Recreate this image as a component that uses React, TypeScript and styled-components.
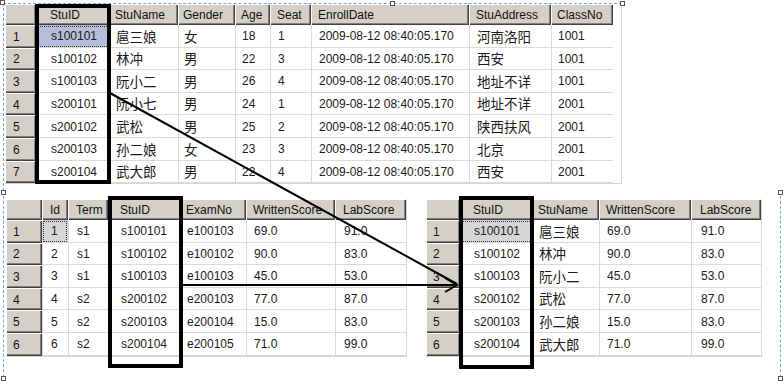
import * as React from 'react';
import styled, { createGlobalStyle } from 'styled-components';

interface IColumn {
  title: string;
  width: number;
  pad: number;
}
interface IBox {
  left: number;
  top: number;
  width: number;
  height: number;
}
interface IResultGridProps {
  columns: IColumn[];
  rows: string[][];
  selectedTone: 'blue' | 'gray';
  box: IBox;
}

const GlobalStyle = createGlobalStyle`
  html, body {
    margin: 0;
    padding: 0;
    background: #fff;
  }
  body {
    font-family: "Liberation Sans", Arial, "Noto Sans CJK SC", sans-serif;
    font-size: 12px;
    color: #1a1a1a;
  }
`;

const Page = styled.div`
  position: relative;
  width: 784px;
  height: 381px;
  overflow: hidden;
  background: #fff;
`;
const TopFrame = styled.div`
  margin: 3px 0 0 3px;
  width: 619px;
  height: 188px;
  border-top: 1px dashed #79a6da;
  border-left: 1px dashed #79a6da;
  padding-left: 1px;
  box-sizing: border-box;
`;
const BottomFrame = styled.div`
  margin-left: 3px;
  width: 778px;
  height: 186px;
  border-left: 1px dashed #79a6da;
  border-right: 1px dashed #79a6da;
  box-sizing: border-box;
  padding: 8px 0 0 2px;
  display: flex;
  gap: 19px;
`;
const GridWrap = styled.div`
  position: relative;
  align-self: flex-start;
`;
const Grid = styled.div<{ $cols: string }>`
  display: grid;
  grid-template-columns: ${(p) => p.$cols};
  grid-template-rows: 21px;
  grid-auto-rows: 22.6px;
  border-right: 1px solid #d9d7d0;
  border-bottom: 1px solid #d9d7d0;
`;
const HeadCell = styled.div<{ $pad: number }>`
  display: flex;
  align-items: center;
  padding-left: ${(p) => p.$pad}px;
  padding-top: 1px;
  background: #d4d0c8;
  box-shadow: inset 1px 1px #fff, inset -1px -1px #404040,
    inset -2px -2px #808080;
  white-space: nowrap;
  overflow: hidden;
  color: #111;
`;
const DataCell = styled.div<{ $pad: number; $sel?: 'blue' | 'gray' }>`
  display: flex;
  align-items: center;
  padding-left: ${(p) => p.$pad}px;
  padding-top: 1px;
  border-left: 1px solid #dcdad4;
  border-bottom: 1px solid #dcdad4;
  white-space: nowrap;
  overflow: hidden;
  color: #1a1a1a;
  background: ${(p) =>
    p.$sel === 'blue' ? '#b6bfda' : p.$sel === 'gray' ? '#d6d6d6' : '#fff'};
  outline: ${(p) => (p.$sel ? '1px dotted #333' : 'none')};
  outline-offset: -2px;
`;
const Cjk = styled.span`
  font-family: "Noto Sans CJK SC", sans-serif;
  font-size: 13.5px;
  line-height: 1;
`;
const Highlight = styled.div<{ $box: IBox }>`
  position: absolute;
  left: ${(p) => p.$box.left}px;
  top: ${(p) => p.$box.top}px;
  width: ${(p) => p.$box.width}px;
  height: ${(p) => p.$box.height}px;
  border: 4px solid #000;
  box-sizing: border-box;
  pointer-events: none;
`;
const Handle = styled.div<{ $x: number; $y: number }>`
  position: absolute;
  left: ${(p) => p.$x}px;
  top: ${(p) => p.$y}px;
  width: 5px;
  height: 5px;
  border: 1px solid #555;
  background: #fff;
  box-sizing: border-box;
`;
const Arrows = styled.svg`
  position: absolute;
  left: 0;
  top: 0;
  pointer-events: none;
`;

const hasCjk = (s: string) => /[\u4e00-\u9fff]/.test(s);

const ResultGrid: React.FunctionComponent<IResultGridProps> = ({
  columns,
  rows,
  selectedTone,
  box,
}) => (
  <GridWrap>
    <Grid $cols={columns.map((c) => `${c.width}px`).join(' ')}>
      {columns.map((c, i) => (
        <HeadCell key={i} $pad={c.pad}>
          {c.title}
        </HeadCell>
      ))}
      {rows.map((row, r) => (
        <React.Fragment key={r}>
          <HeadCell $pad={columns[0].pad}>{r + 1}</HeadCell>
          {row.map((v, i) => (
            <DataCell
              key={i}
              $pad={columns[i + 1].pad}
              $sel={r === 0 && i === 0 ? selectedTone : undefined}
            >
              {hasCjk(v) ? <Cjk>{v}</Cjk> : v}
            </DataCell>
          ))}
        </React.Fragment>
      ))}
    </Grid>
    <Highlight $box={box} />
  </GridWrap>
);

const date = '2009-08-12 08:40:05.170';

const studentCols: IColumn[] = [
  { title: '', width: 31, pad: 8 },
  { title: 'StuID', width: 74, pad: 14 },
  { title: 'StuName', width: 68, pad: 5 },
  { title: 'Gender', width: 57, pad: 5 },
  { title: 'Age', width: 35, pad: 6 },
  { title: 'Seat', width: 41, pad: 7 },
  { title: 'EnrollDate', width: 158, pad: 7 },
  { title: 'StuAddress', width: 82, pad: 7 },
  { title: 'ClassNo', width: 62, pad: 6 },
];
const students = [
  ['s100101', '扈三娘', '女', '18', '1', date, '河南洛阳', '1001'],
  ['s100102', '林冲', '男', '22', '3', date, '西安', '1001'],
  ['s100103', '阮小二', '男', '26', '4', date, '地址不详', '1001'],
  ['s200101', '阮小七', '男', '24', '1', date, '地址不详', '2001'],
  ['s200102', '武松', '男', '25', '2', date, '陕西扶风', '2001'],
  ['s200103', '孙二娘', '女', '23', '3', date, '北京', '2001'],
  ['s200104', '武大郎', '男', '22', '4', date, '西安', '2001'],
];

const examCols: IColumn[] = [
  { title: '', width: 36, pad: 7 },
  { title: 'Id', width: 26, pad: 8 },
  { title: 'Term', width: 40, pad: 8 },
  { title: 'StuID', width: 73, pad: 12 },
  { title: 'ExamNo', width: 65, pad: 5 },
  { title: 'WrittenScore', width: 89, pad: 7 },
  { title: 'LabScore', width: 71, pad: 8 },
];
const exams = [
  ['1', 's1', 's100101', 'e100103', '69.0', '91.0'],
  ['2', 's1', 's100102', 'e100102', '90.0', '83.0'],
  ['3', 's1', 's100103', 'e100103', '45.0', '53.0'],
  ['4', 's2', 's200102', 'e200103', '77.0', '87.0'],
  ['5', 's2', 's200103', 'e200104', '15.0', '83.0'],
  ['6', 's2', 's200104', 'e200105', '71.0', '99.0'],
];

const joinCols: IColumn[] = [
  { title: '', width: 34, pad: 7 },
  { title: 'StuID', width: 73, pad: 13 },
  { title: 'StuName', width: 66, pad: 5 },
  { title: 'WrittenScore', width: 92, pad: 7 },
  { title: 'LabScore', width: 70, pad: 9 },
];
const joined = [
  ['s100101', '扈三娘', '69.0', '91.0'],
  ['s100102', '林冲', '90.0', '83.0'],
  ['s100103', '阮小二', '45.0', '53.0'],
  ['s200102', '武松', '77.0', '87.0'],
  ['s200103', '孙二娘', '15.0', '83.0'],
  ['s200104', '武大郎', '71.0', '99.0'],
];

// frame resize handles: [x, y]
const handles = [
  [0, 0],
  [390, 1],
  [620, 1],
  [1, 190],
  [778, 190],
  [1, 376],
  [778, 376],
];

const App: React.FunctionComponent = () => (
  <Page>
    <GlobalStyle />
    <TopFrame>
      <ResultGrid
        columns={studentCols}
        rows={students}
        selectedTone="blue"
        box={{ left: 30, top: 0, width: 76, height: 180 }}
      />
    </TopFrame>
    <BottomFrame>
      <ResultGrid
        columns={examCols}
        rows={exams}
        selectedTone="gray"
        box={{ left: 102, top: -3, width: 75, height: 172 }}
      />
      <ResultGrid
        columns={joinCols}
        rows={joined}
        selectedTone="gray"
        box={{ left: 33, top: -3, width: 75, height: 173 }}
      />
    </BottomFrame>
    {handles.map(([x, y], i) => (
      <Handle key={i} $x={x} $y={y} />
    ))}
    <Arrows width={784} height={381} viewBox="0 0 784 381">
      <g stroke="#000" strokeWidth={2} fill="none">
        <line x1={110} y1={93} x2={457} y2={284} />
        <line x1={182} y1={285} x2={457} y2={285} />
        <polyline points="445,278 457,285 445,292" />
      </g>
    </Arrows>
  </Page>
);

export default App;
